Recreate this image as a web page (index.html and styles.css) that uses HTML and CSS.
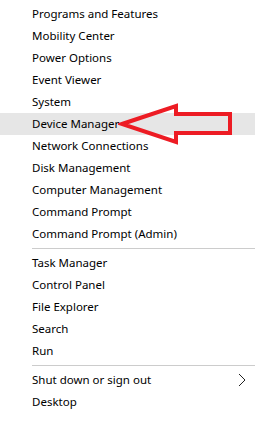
FILE: index.html
```html
<!DOCTYPE html>
<html lang="en">
<head>
  <meta charset="UTF-8" />
  <title>Quick Link Menu</title>
  <link rel="stylesheet" href="styles.css">
</head>
<body>
  <nav class="menu">
    <a href="#" class="item">Programs and Features</a>
    <a href="#" class="item">Mobility Center</a>
    <a href="#" class="item">Power Options</a>
    <a href="#" class="item">Event Viewer</a>
    <a href="#" class="item">System</a>
    <a href="#" class="item ativo">Device Manager
      <svg class="seta" width="120" height="44" viewBox="0 0 120 44">
        <polygon points="4,21 58,3 58,11 112,11 112,30 58,30 58,39" fill="none" stroke="#ed1c24" stroke-width="4" stroke-linejoin="miter"/>
      </svg>
    </a>
    <a href="#" class="item">Network Connections</a>
    <a href="#" class="item">Disk Management</a>
    <a href="#" class="item">Computer Management</a>
    <a href="#" class="item">Command Prompt</a>
    <a href="#" class="item">Command Prompt (Admin)</a>
    <div class="divisor"></div>
    <a href="#" class="item">Task Manager</a>
    <a href="#" class="item">Control Panel</a>
    <a href="#" class="item">File Explorer</a>
    <a href="#" class="item">Search</a>
    <a href="#" class="item">Run</a>
    <div class="divisor"></div>
    <a href="#" class="item">Shut down or sign out
      <svg class="chevron" width="8" height="14" viewBox="0 0 8 14">
        <path d="M1 1 L7 7 L1 13" fill="none" stroke="#222" stroke-width="1"/>
      </svg>
    </a>
    <a href="#" class="item">Desktop</a>
  </nav>
</body>
</html>
```

FILE: styles.css
```css
* {
  margin: 0;
  padding: 0;
  box-sizing: border-box;
}

body {
  font-family: 'Noto Sans', 'Open Sans', sans-serif;
  font-size: 11.5px;
  color: #000;
  background-color: #fff;
}

.menu {
  width: 255px;
  padding-top: 3px;
  display: flex;
  flex-direction: column;
}

.item {
  position: relative;
  display: flex;
  align-items: center;
  height: 22px;
  padding-left: 32px;
  padding-bottom: 1px;
  color: #000;
  text-decoration: none;
}

.item.ativo {
  background-color: #e6e6e6;
}

.divisor {
  height: 7px;
  margin-left: 32px;
  padding-top: 3px;
}

.divisor::after {
  content: '';
  display: block;
  height: 1px;
  background-color: #cccccc;
}

.seta {
  position: absolute;
  left: 118px;
  top: -10px;
}

.chevron {
  position: absolute;
  left: 238px;
  top: 4px;
}
```
